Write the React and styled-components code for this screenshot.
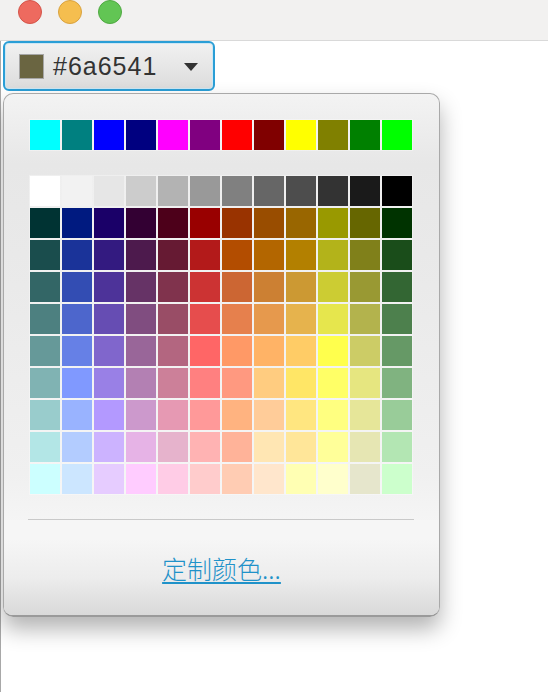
import React from "react"
import styled, { createGlobalStyle } from "styled-components"

const GlobalStyle = createGlobalStyle`
    body {
        margin: 0;
        background: #ffffff;
        font-family: "Liberation Sans", "Noto Sans CJK SC", sans-serif;
    }
`

const TOP_ROW = [
    "#00ffff", "#008080", "#0000ff", "#000080", "#ff00ff", "#800080",
    "#ff0000", "#800000", "#ffff00", "#808000", "#008000", "#00ff00"
]

const RAW = [
    255,255,255, 242,242,242, 230,230,230, 204,204,204, 179,179,179, 153,153,153,
    128,128,128, 102,102,102, 77,77,77, 51,51,51, 26,26,26, 0,0,0,
    0,51,51, 0,26,128, 26,0,104, 51,0,51, 77,0,26, 153,0,0,
    153,51,0, 153,77,0, 153,102,0, 153,153,0, 102,102,0, 0,51,0,
    26,77,77, 26,51,153, 51,26,128, 77,26,77, 102,26,51, 179,26,26,
    179,77,0, 179,102,0, 179,128,0, 179,179,26, 128,128,26, 26,77,26,
    51,102,102, 51,77,179, 77,51,153, 102,51,102, 128,51,77, 204,51,51,
    204,102,51, 204,128,51, 204,153,51, 204,204,51, 153,153,51, 51,102,51,
    77,128,128, 77,102,204, 102,77,179, 128,77,128, 153,77,102, 230,77,77,
    230,128,77, 230,153,77, 230,179,77, 230,230,77, 179,179,77, 77,128,77,
    102,153,153, 102,128,230, 128,102,204, 153,102,153, 179,102,128, 255,102,102,
    255,153,102, 255,179,102, 255,204,102, 255,255,77, 204,204,102, 102,153,102,
    128,179,179, 128,153,255, 153,128,230, 179,128,179, 204,128,153, 255,128,128,
    255,153,128, 255,204,128, 255,230,102, 255,255,102, 230,230,128, 128,179,128,
    153,204,204, 153,179,255, 179,153,255, 204,153,204, 230,153,179, 255,153,153,
    255,179,128, 255,204,153, 255,230,128, 255,255,128, 230,230,153, 153,204,153,
    179,230,230, 179,204,255, 204,179,255, 230,179,230, 230,179,204, 255,179,179,
    255,179,153, 255,230,179, 255,230,153, 255,255,153, 230,230,179, 179,230,179,
    204,255,255, 204,230,255, 230,204,255, 255,204,255, 255,204,230, 255,204,204,
    255,204,179, 255,230,204, 255,255,179, 255,255,204, 230,230,204, 204,255,204
]

const PALETTE = []
for (let i = 0; i < RAW.length; i += 3) {
    PALETTE.push(`rgb(${RAW[i]}, ${RAW[i + 1]}, ${RAW[i + 2]})`)
}

const Window = styled.div`
    width: 548px;
    height: 692px;
    display: flex;
    flex-direction: column;
    overflow: hidden;
`

const TitleBar = styled.div`
    height: 40px;
    flex-shrink: 0;
    display: flex;
    align-items: flex-start;
    gap: 16px;
    padding-left: 18px;
    background: #f2f1f0;
    border-bottom: 1px solid #d9d9d9;
`

const Light = styled.span`
    width: 24px;
    height: 24px;
    border-radius: 50%;
    box-sizing: border-box;
    background: ${p => p.color};
    border: 1px solid ${p => p.edge};
`

const Content = styled.div`
    flex: 1;
    border-left: 1px solid #a8a8a8;
    padding-left: 2px;
    display: flex;
    flex-direction: column;
    align-items: flex-start;
`

const PickerButton = styled.div`
    width: 212px;
    height: 50px;
    box-sizing: border-box;
    display: flex;
    align-items: center;
    padding: 0 15px 0 14px;
    border: 2px solid #2a9ed6;
    border-radius: 6px;
    background: linear-gradient(#f1f1f1, #dcdcdc);
    box-shadow: inset 0 0 0 1px #cde7f4;
`

const Swatch = styled.span`
    width: 25px;
    height: 25px;
    box-sizing: border-box;
    border: 1px solid #a6a6a6;
    background: ${p => p.color};
    margin-right: 9px;
`

const ValueText = styled.span`
    font-size: 25px;
    letter-spacing: 1px;
    color: #333333;
    line-height: 1;
    margin-top: 1px;
`

const Arrow = styled.span`
    margin-left: auto;
    width: 0;
    height: 0;
    border-left: 7.5px solid transparent;
    border-right: 7.5px solid transparent;
    border-top: 8px solid #333333;
    margin-top: 2px;
`

const Popup = styled.div`
    margin-top: 2px;
    width: 437px;
    height: 524px;
    box-sizing: border-box;
    border: 1px solid #a9a9a9;
    border-bottom: 2px solid #9a9a9a;
    border-radius: 10px;
    background: linear-gradient(#f3f3f3 0px, #e7e7e7 70px, #e9e9e9 160px, #f0f0f0 380px, #f6f6f6 440px);
    box-shadow: 0 12px 22px rgba(0, 0, 0, 0.3);
    display: flex;
    flex-direction: column;
    overflow: hidden;
`

const Palette = styled.div`
    padding: 26px 0 0 26px;
`

const Grid = styled.div`
    display: grid;
    grid-template-columns: repeat(12, 30px);
    grid-auto-rows: 30px;
    gap: 2px;
    margin-bottom: ${p => p.spacing}px;
`

const Cell = styled.span`
    background: ${p => p.color};
    outline: 1px solid rgba(255, 255, 255, 0.35);
`

const Separator = styled.div`
    margin: 25px 0 0 24px;
    width: 386px;
    height: 1px;
    background: #c9c9c9;
`

const Footer = styled.div`
    flex: 1;
    display: flex;
    justify-content: center;
    align-items: flex-start;
    padding-top: 33px;
    background: linear-gradient(#f6f6f6 20%, #ededed 60%, #d9d9d9 100%);
`

const CustomLink = styled.a`
    font-family: "Noto Sans CJK SC", "Liberation Sans", sans-serif;
    font-size: 25px;
    font-weight: 300;
    line-height: 1.2;
    color: #1f92c9;
    text-decoration: underline;
    text-underline-offset: 3px;
    text-decoration-thickness: 1.5px;
    cursor: pointer;
`

const App = () => {
    return (
        <Window>
            <GlobalStyle />
            <TitleBar>
                <Light color="#ee6a5f" edge="#d45449" />
                <Light color="#f5be4f" edge="#d9a23f" />
                <Light color="#62c554" edge="#50a942" />
            </TitleBar>
            <Content>
                <PickerButton>
                    <Swatch color="#6a6541" />
                    <ValueText>#6a6541</ValueText>
                    <Arrow />
                </PickerButton>
                <Popup>
                    <Palette>
                        <Grid spacing={26}>
                            {TOP_ROW.map((c, i) => <Cell key={i} color={c} />)}
                        </Grid>
                        <Grid spacing={0}>
                            {PALETTE.map((c, i) => <Cell key={i} color={c} />)}
                        </Grid>
                    </Palette>
                    <Separator />
                    <Footer>
                        <CustomLink>定制颜色...</CustomLink>
                    </Footer>
                </Popup>
            </Content>
        </Window>
    )
}

export default App
